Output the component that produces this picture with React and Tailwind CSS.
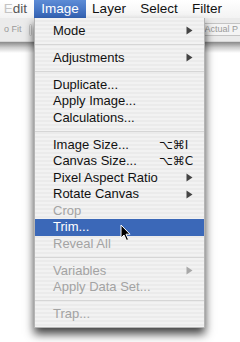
import React from 'react';

const FONT = "font-['Liberation_Sans',Arial,sans-serif]";

const items = [
  { label: 'Mode', arrow: true },
  'sep',
  { label: 'Adjustments', arrow: true },
  'sep',
  { label: 'Duplicate...' },
  { label: 'Apply Image...' },
  { label: 'Calculations...' },
  'sep',
  { label: 'Image Size...', keys: '⌥⌘I' },
  { label: 'Canvas Size...', keys: '⌥⌘C' },
  { label: 'Pixel Aspect Ratio', arrow: true },
  { label: 'Rotate Canvas', arrow: true },
  { label: 'Crop', disabled: true },
  { label: 'Trim...', active: true },
  { label: 'Reveal All', disabled: true },
  'sep',
  { label: 'Variables', arrow: true, disabled: true },
  { label: 'Apply Data Set...', disabled: true },
  'sep',
  { label: 'Trap...', disabled: true },
];

function Arrow({ color }) {
  return (
    <svg width="7" height="9" viewBox="0 0 7 9" className="shrink-0 mr-px">
      <path d="M0.5 0.5 L6.5 4.5 L0.5 8.5 Z" fill={color} />
    </svg>
  );
}

function MenuRow({ item }) {
  const text = item.active ? 'text-white' : item.disabled ? 'text-[#a3a3a3]' : 'text-[#111]';
  return (
    <div
      className={`h-[16.5px] flex items-center pl-[18px] pr-[10px] ${item.active ? 'bg-[#3b68b8]' : ''}`}
    >
      <span className={`flex-1 text-[13px] leading-[16.5px] whitespace-nowrap ${text}`}>{item.label}</span>
      {item.keys && (
        <span className="w-[35px] text-[12px] leading-[16.5px] text-[#111] font-['DejaVu_Sans',sans-serif] whitespace-nowrap">
          {item.keys}
        </span>
      )}
      {item.arrow && <Arrow color={item.disabled ? '#a8a8a8' : '#444'} />}
    </div>
  );
}

function Separator() {
  return (
    <div className="h-[10.5px] flex items-center">
      <div className="w-full h-px bg-[#d6d6d6]" />
    </div>
  );
}

export default function App() {
  return (
    <div className={`relative w-[240px] h-[342px] overflow-hidden bg-white ${FONT}`}>
      {/* menu bar */}
      <div className="h-[18px] flex bg-gradient-to-b from-[#ffffff] to-[#f3f3f3] text-[13.5px] leading-[18px] text-[#111]">
        <div className="w-[34px] shrink-0 flex justify-end pr-[7px]">
          <span className="text-[#555]">
            <span className="text-[#c4c4c4]">E</span>dit
          </span>
        </div>
        <div className="w-[52px] shrink-0 text-center text-white bg-gradient-to-b from-[#5d8cd6] to-[#3463b5]">Image</div>
        <div className="w-[46px] shrink-0 text-center">Layer</div>
        <div className="w-[54px] shrink-0 text-center">Select</div>
        <div className="w-[42px] shrink-0 text-center">Filter</div>
      </div>

      {/* options bar behind menu */}
      <div className="h-[24px] flex items-center bg-[#ebebeb] border-b border-[#d6d6d6] text-[9px] text-[#9a9a9a]">
        <span className="ml-[4px]">o Fit</span>
        <div className="ml-[7px] w-[3px] h-[12px] rounded-sm border border-[#c8c8c8]" />
        <div className="ml-auto h-[13px] pl-[3px] pr-[2px] rounded-l-[3px] border-y border-l border-[#c4c4c4] bg-[#f4f4f4] leading-[11px]">
          Actual P
        </div>
      </div>
      <div className="h-[11px] bg-gradient-to-b from-[#8a8a8a] via-[#cfcfcf] to-white" />

      {/* dropdown menu */}
      <div className="absolute left-[34px] top-[18px] w-[171px] pt-[4.5px] pb-[4px] border-x border-b border-[#b4b4b4] shadow-[0_6px_9px_rgba(0,0,0,0.75)] bg-[repeating-linear-gradient(to_bottom,#f2f2f2_0px,#f2f2f2_2px,#ebebeb_2px,#ebebeb_4px)]">
        {items.map((item, i) =>
          item === 'sep' ? <Separator key={i} /> : <MenuRow key={i} item={item} />
        )}
      </div>

      {/* cursor */}
      <svg
        className="absolute left-[120px] top-[224px]"
        width="12"
        height="18"
        viewBox="0 0 12 18"
      >
        <path
          d="M1 1 L1 14 L4 11 L6.5 16.5 L8.5 15.5 L6 10.2 L10 10.2 Z"
          fill="#000"
          stroke="#fff"
          strokeWidth="1"
          strokeLinejoin="round"
        />
      </svg>
    </div>
  );
}
